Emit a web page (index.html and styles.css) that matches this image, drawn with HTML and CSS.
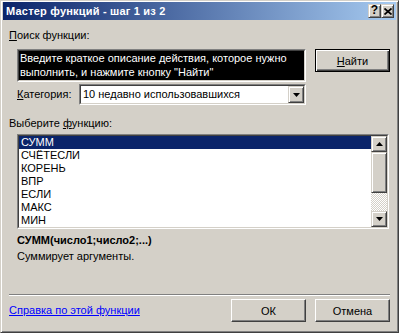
FILE: index.html
```html
<!DOCTYPE html>
<html lang="ru">
<head>
<meta charset="utf-8">
<title>Мастер функций</title>
<link rel="stylesheet" href="styles.css">
</head>
<body>
<div class="window">
  <div class="titlebar">
    <span class="title">Мастер функций - шаг 1 из 2</span>
    <div class="caption-btns">
      <span class="cbtn help">?</span>
      <span class="cbtn close"><svg width="8" height="7" viewBox="0 0 8 7"><path d="M0.5 0.5 L7.5 6.5 M7.5 0.5 L0.5 6.5" stroke="#000" stroke-width="1.7" fill="none"/></svg></span>
    </div>
  </div>
  <div class="body">
    <div class="label l-search"><u>П</u>оиск функции:</div>
    <div class="search-row">
      <div class="sunken search-outer"><div class="sunken-in search-box">Введите краткое описание действия, которое нужно<br>выполнить, и нажмите кнопку "Найти"</div></div>
      <button class="btn default"><u>Н</u>айти</button>
    </div>
    <div class="cat-row">
      <span class="cat-label"><u>К</u>атегория:</span>
      <div class="sunken select-outer">
        <div class="sunken-in select-in">
          <span class="select-text">10 недавно использовавшихся</span>
          <span class="raised drop-btn"><svg width="7" height="4" viewBox="0 0 7 4"><path d="M0 0 H7 L3.5 4 Z" fill="#000"/></svg></span>
        </div>
      </div>
    </div>
    <div class="label l-choose">Выберите <u>ф</u>ункцию:</div>
    <div class="sunken list-outer">
      <div class="sunken-in list-in">
        <ul class="items">
          <li class="selected">СУММ</li>
          <li>СЧЁТЕСЛИ</li>
          <li>КОРЕНЬ</li>
          <li>ВПР</li>
          <li>ЕСЛИ</li>
          <li>МАКС</li>
          <li>МИН</li>
        </ul>
        <div class="scrollbar">
          <span class="raised sb-btn"><svg width="7" height="4" viewBox="0 0 7 4"><path d="M0 4 H7 L3.5 0 Z" fill="#000"/></svg></span>
          <span class="raised sb-thumb"></span>
          <span class="sb-track"></span>
          <span class="raised sb-btn"><svg width="7" height="4" viewBox="0 0 7 4"><path d="M0 0 H7 L3.5 4 Z" fill="#000"/></svg></span>
        </div>
      </div>
    </div>
    <div class="sig">СУММ(число1;число2;...)</div>
    <div class="desc">Суммирует аргументы.</div>
    <div class="sep"></div>
    <div class="bottom-row">
      <a class="help-link" href="#">Справка по этой функции</a>
      <div class="btns">
        <button class="btn">ОК</button>
        <button class="btn">Отмена</button>
      </div>
    </div>
  </div>
</div>
</body>
</html>
```
FILE: styles.css
```css
* { box-sizing: border-box; }
html, body { margin: 0; padding: 0; background: #d4d0c8; }
body {
  font-family: "Liberation Sans", Arial, sans-serif;
  font-size: 11px;
  line-height: 13px;
  color: #000;
}
u { text-decoration: underline; text-underline-offset: 1px; }

.window {
  width: 399px;
  height: 333px;
  background: #d4d0c8;
  border: 1px solid;
  border-color: #d4d0c8 #404040 #404040 #d4d0c8;
  box-shadow: inset 1px 1px #fff, inset -1px -1px #808080;
  padding: 1px 2px 2px 2px;
  display: flex;
  flex-direction: column;
}

.titlebar {
  height: 18px;
  background: linear-gradient(to right, #0a246a, #a6caf0);
  display: flex;
  align-items: center;
  justify-content: space-between;
  padding: 0 2px 0 3px;
}
.title { color: #fff; font-weight: bold; letter-spacing: 0.2px; }
.caption-btns { display: flex; }
.cbtn {
  width: 13px;
  height: 14px;
  background: #d4d0c8;
  border: 1px solid;
  border-color: #d4d0c8 #404040 #404040 #d4d0c8;
  box-shadow: inset 1px 1px #fff, inset -1px -1px #808080;
  display: flex;
  align-items: center;
  justify-content: center;
  font-weight: bold;
  font-size: 12px;
}
.help { padding-bottom: 1px; }

.body {
  padding: 0 6px;
  display: flex;
  flex-direction: column;
}

.label { height: 13px; }
.l-search { margin-top: 9px; }

.sunken {
  border: 1px solid;
  border-color: #808080 #fff #fff #808080;
}
.sunken-in {
  border: 1px solid;
  border-color: #404040 #d4d0c8 #d4d0c8 #404040;
}
.raised {
  background: #d4d0c8;
  border: 1px solid;
  border-color: #d4d0c8 #404040 #404040 #d4d0c8;
  box-shadow: inset 1px 1px #fff, inset -1px -1px #808080;
}

.search-row { display: flex; align-items: flex-start; margin-top: 7px; margin-left: 8px; }
.search-outer { width: 289px; height: 33px; }
.search-box {
  height: 31px;
  background: #000;
  color: #fff;
  line-height: 14px;
  padding: 0 1px 0 1px;
  white-space: nowrap;
}

.btn {
  font-family: inherit;
  font-size: 11px;
  color: #000;
  width: 75px;
  height: 23px;
  padding: 0;
  background: #d4d0c8;
  border: 1px solid;
  border-color: #fff #404040 #404040 #fff;
  box-shadow: inset -1px -1px #808080;
}
.btn.default {
  margin-left: 9px;
  border-color: #000;
  box-shadow: inset 1px 1px #fff, inset -1px -1px #404040, inset -2px -2px #808080;
}

.cat-row { display: flex; align-items: center; margin-top: 2px; margin-left: 8px; height: 21px; }
.cat-label { width: 62px; }
.select-outer { width: 227px; height: 21px; }
.select-in {
  height: 19px;
  background: #fff;
  display: flex;
  align-items: center;
  justify-content: space-between;
}
.select-text { padding-left: 2px; }
.drop-btn {
  width: 16px;
  height: 17px;
  display: flex;
  align-items: center;
  justify-content: center;
}

.l-choose { margin-top: 12px; }

.list-outer { margin-top: 4px; margin-left: 8px; width: 372px; height: 95px; }
.list-in { height: 93px; background: #fff; display: flex; }
.items { list-style: none; margin: 0; padding: 0; flex: 1; }
.items li { height: 13px; line-height: 13px; padding-left: 2px; }
.items li.selected { background: #0a246a; color: #fff; }

.scrollbar { width: 16px; display: flex; flex-direction: column; }
.sb-btn {
  height: 16px;
  display: flex;
  align-items: center;
  justify-content: center;
}
.sb-thumb { height: 41px; }
.sb-track {
  height: 18px;
  background: repeating-conic-gradient(#d4d0c8 0 25%, #fff 0 50%) 0 0 / 2px 2px;
}

.sig { margin-top: 5px; margin-left: 8px; font-weight: bold; height: 13px; }
.desc { margin-top: 3px; margin-left: 8px; height: 13px; }

.sep {
  margin-top: 31px;
  height: 2px;
  border-top: 1px solid #808080;
  border-bottom: 1px solid #fff;
}

.bottom-row {
  margin-top: 3px;
  display: flex;
  align-items: center;
  justify-content: space-between;
}
.help-link { color: #0000ff; text-decoration: underline; }
.btns { display: flex; gap: 9px; }
```
